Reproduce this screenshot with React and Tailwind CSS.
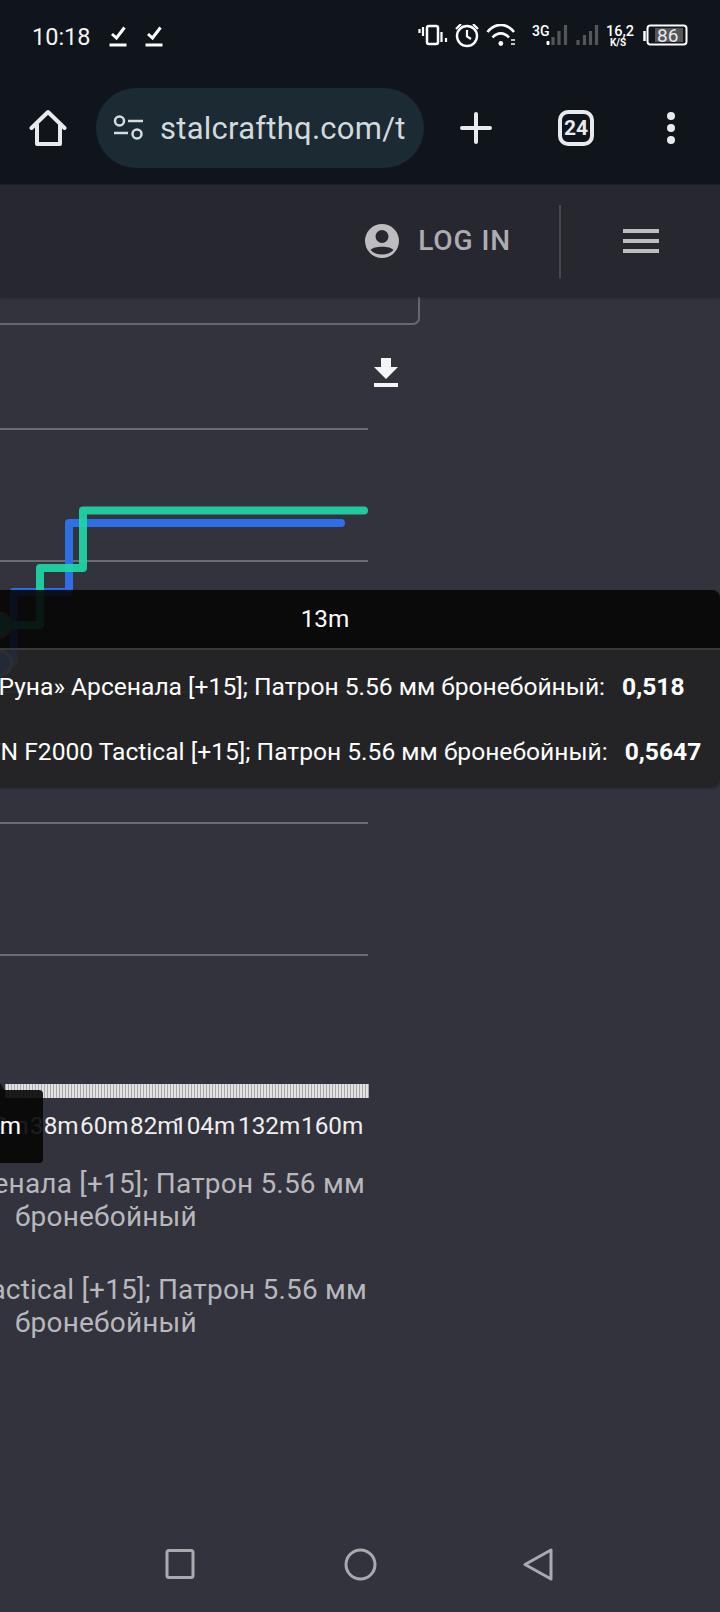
import React from 'react';

const axisLabels = [
  { text: '22m', width: 'w-[50px]' },
  { text: '38m', width: 'w-[50px]' },
  { text: '60m', width: 'w-[50px]' },
  { text: '82m', width: 'w-[43px]' },
  { text: '104m', width: 'w-[65px]' },
  { text: '132m', width: 'w-[63px]' },
  { text: '160m', width: 'w-[62px]' },
];

function CheckMark() {
  return (
    <svg width="18" height="21" viewBox="0 0 18 21" fill="none" stroke="#fff">
      <path d="M3 8l4.500 4L15.500 1.500" strokeWidth="3" />
      <path d="M0.5 19h17" strokeWidth="3" />
    </svg>
  );
}

function StatusIcons() {
  return (
    <svg width="270" height="24" viewBox="418 25 270 24" fill="none">
      {/* vibrate */}
      <path d="M419.500 30v4M423 28v9M441.500 33v10M446 39v4" stroke="#fff" strokeWidth="2.200" />
      <rect x="427" y="27" width="11" height="18" rx="2" stroke="#fff" strokeWidth="2.5" />
      {/* alarm */}
      <circle cx="467" cy="37" r="10" stroke="#fff" strokeWidth="2.4" />
      <path d="M467 31v6.500l4 2.500M456 30l5-5M478 30l-5-5" stroke="#fff" strokeWidth="2.200" />
      {/* wifi */}
      <path d="M487.500 33c7.500-9.500 19-9.500 26.500 0M492.500 38.500c5-5.500 11.500-5.500 16.500 0" stroke="#fff" strokeWidth="2.600" />
      <circle cx="500.800" cy="44.500" r="2.400" fill="#fff" />
      <path d="M511 41h4M511 45h4" stroke="#fff" strokeWidth="1.500" />
      {/* mobile signal */}
      <rect x="546.500" y="42" width="3" height="4" rx="1" fill="#fff" />
      <path d="M553 46v-8M559 46v-14M565.500 46v-20" stroke="#55565a" strokeWidth="3.200" />
      <path d="M578 46v-5M584.500 46v-10M590.500 46v-14M596.500 46v-20" stroke="#55565a" strokeWidth="3.200" />
      {/* battery */}
      <path d="M644.500 32v10" stroke="#fff" strokeWidth="2.500" />
      <rect x="647.500" y="26.500" width="39" height="19" rx="3" stroke="#fff" strokeWidth="2" />
      <rect x="655" y="29" width="28" height="14" fill="#55565a" />
    </svg>
  );
}

function HomeIcon() {
  return (
    <svg width="38" height="38" viewBox="0 0 38 38" fill="none" stroke="#e8eaed" strokeWidth="4" strokeLinejoin="round">
      <path d="M2.500 19L19 3l16.500 16" strokeLinecap="round" />
      <path d="M8 15v20h23V15" />
    </svg>
  );
}

function TuneIcon() {
  return (
    <svg width="30" height="26" viewBox="0 0 30 26" fill="none" stroke="#d6dbde" strokeWidth="2.500">
      <circle cx="6.500" cy="6" r="4.500" />
      <path d="M15 6h15M1 18h14" />
      <circle cx="24" cy="19" r="4.500" />
    </svg>
  );
}

function NavIcons() {
  return (
    <div className="mt-auto flex h-[96px] shrink-0 items-start pt-[32px]">
      <div className="ml-[165px]">
        <svg width="31" height="32" viewBox="0 0 31 32" fill="none" stroke="#a9a9ae" strokeWidth="3">
          <rect x="2" y="2.500" width="26" height="27" rx="2" />
        </svg>
      </div>
      <div className="ml-[148px]">
        <svg width="33" height="33" viewBox="0 0 33 33" fill="none" stroke="#a9a9ae" strokeWidth="3">
          <circle cx="16.500" cy="16.500" r="14.500" />
        </svg>
      </div>
      <div className="ml-[146px]">
        <svg width="30" height="33" viewBox="0 0 30 33" fill="none" stroke="#a9a9ae" strokeWidth="3" strokeLinejoin="round">
          <path d="M2 16.500L28 2v29z" />
        </svg>
      </div>
    </div>
  );
}

function ChartSvg() {
  return (
    <svg width="372" height="700" viewBox="0 400 372 700" fill="none" className="block shrink-0">
      <defs>
        <pattern id="ticks" x="0" y="0" width="3" height="14" patternUnits="userSpaceOnUse">
          <rect width="3" height="14" fill="#e2e2e2" />
          <rect x="2" width="1" height="14" fill="#a8a8ac" />
        </pattern>
      </defs>
      {[429, 561, 692, 823, 955].map((y) => (
        <path key={y} d={`M0 ${y}H368`} stroke="#6b6b71" strokeWidth="2" />
      ))}
      <path d="M0 663H13.500V592H69V523H341" stroke="#2f6fe6" strokeWidth="8" strokeLinecap="round" strokeLinejoin="round" />
      <path d="M0 625H40V568H83V510.500H364" stroke="#1fd4a3" strokeOpacity="0.95" strokeWidth="8" strokeLinecap="round" strokeLinejoin="round" />
      <circle cx="-2" cy="625" r="12.500" fill="#1fd4a3" stroke="#9a9aa0" strokeWidth="3" />
      <circle cx="-1" cy="663" r="12.500" fill="#2f6fe6" stroke="#9a9aa0" strokeWidth="3" />
      <rect x="5" y="1084" width="364" height="14" fill="url(#ticks)" />
      <path d="M-5 1091L0 1083l5 8z" fill="#111" />
    </svg>
  );
}

export default function App() {
  return (
    <div className="relative flex h-[1612px] w-[720px] flex-col overflow-hidden bg-[#33333d] font-[Roboto,sans-serif]">
      {/* Browser chrome */}
      <div className="shrink-0 bg-[#10151b]">
        <div className="flex h-[72px] items-center pl-[32px]">
          <span className="mt-[4px] w-[77px] text-[23.500px] leading-none text-[#f2f3f4]">10:18</span>
          <CheckMark />
          <span className="w-[18px]" />
          <CheckMark />
          <div className="relative ml-auto mr-[32px] h-[24px] w-[270px]">
            <StatusIcons />
            <span className="absolute left-[114px] top-[0px] text-[14px] font-medium leading-none text-white">3G</span>
            <span className="absolute left-[188px] top-[1px] text-[14.500px] font-medium leading-none text-white">16,2</span>
            <span className="absolute left-[192px] top-[14px] text-[10px] font-bold leading-none text-white">K/S</span>
            <span className="absolute left-[239px] top-[2px] text-[19px] leading-none text-[#e8e8e8]">86</span>
          </div>
        </div>
        <div className="flex h-[113px] items-start border-b border-[#1e2329]">
          <div className="ml-[29px] mt-[37px]">
            <HomeIcon />
          </div>
          <div className="ml-[29px] mt-[16px] flex h-[80px] w-[328px] items-center rounded-full bg-[#1b2a33] pl-[17px]">
            <TuneIcon />
            <span className="ml-[17px] text-[31px] leading-none tracking-[0.25px] text-[#d3d9dc]">stalcrafthq.com/t</span>
          </div>
          <svg width="34" height="34" viewBox="0 0 34 34" fill="none" stroke="#e8eaed" strokeWidth="4" strokeLinecap="round" className="ml-[35px] mt-[39px]">
            <path d="M17 3v28M3 17h28" />
          </svg>
          <div className="ml-[65px] mt-[38px] flex h-[36px] w-[36px] items-center justify-center rounded-[10px] border-4 border-[#e8eaed] text-[21px] font-bold leading-none text-[#e8eaed]">
            24
          </div>
          <div className="ml-[73px] mt-[40px] flex flex-col gap-[4px]">
            <span className="h-[8px] w-[8px] rounded-full bg-[#e8eaed]" />
            <span className="h-[8px] w-[8px] rounded-full bg-[#e8eaed]" />
            <span className="h-[8px] w-[8px] rounded-full bg-[#e8eaed]" />
          </div>
        </div>
      </div>

      {/* Site header */}
      <div className="z-10 flex h-[112px] shrink-0 items-center justify-end bg-[#27272f] shadow-[0_1px_3px_rgba(0,0,0,0.3)]">
        <svg width="34" height="34" viewBox="0 0 34 34" className="mr-[19px]">
          <circle cx="17" cy="17" r="17" fill="#bdbdc0" />
          <circle cx="17" cy="12.500" r="6.500" fill="#27272f" />
          <path d="M5.500 26c3-4.500 20-4.500 23 0-5.500 6-17.500 6-23 0z" fill="#27272f" />
        </svg>
        <span className="mr-[48px] text-[28px] font-medium leading-none tracking-[0.9px] text-[#adadb1]">LOG IN</span>
        <span className="mr-[62px] h-[73px] w-[2px] bg-[#47474d]" />
        <div className="mr-[61px] flex w-[36px] flex-col gap-[5.500px]">
          <span className="h-[4.500px] bg-[#bdbdc0]" />
          <span className="h-[4.500px] bg-[#bdbdc0]" />
          <span className="h-[4.500px] bg-[#bdbdc0]" />
        </div>
      </div>

      {/* Chart card */}
      <div className="flex flex-1 flex-col">
        <div className="h-[28px] w-[420px] shrink-0 rounded-br-[7px] border-b-2 border-r-2 border-[#66666c]" />
        <div className="flex h-[75px] shrink-0 items-start pl-[374px] pt-[33px]">
          <svg width="24" height="29" viewBox="0 0 24 29" fill="#f4f5f7">
            <path d="M7 0h10v9h7L12 21 0 9h7z" />
            <rect y="25" width="24" height="4" />
          </svg>
        </div>
        <ChartSvg />
        <div className="ml-[-20px] mt-[14px] flex shrink-0 text-[24.300px] leading-none text-[#eeeeee]">
          {axisLabels.map((label) => (
            <span key={label.text} className={`${label.width} whitespace-nowrap`}>{label.text}</span>
          ))}
        </div>
        <div className="ml-[-154px] mt-[29px] w-[520px] shrink-0 text-center text-[28px] leading-[33px] tracking-[0.2px] text-[#b8b8bc]">
          <p className="whitespace-nowrap">«Руна» Арсенала [+15]; Патрон 5.56 мм</p>
          <p>бронебойный</p>
        </div>
        <div className="ml-[-154px] mt-[40px] w-[520px] shrink-0 text-center text-[28px] leading-[33px] tracking-[0.2px] text-[#b8b8bc]">
          <p className="whitespace-nowrap">FN F2000 Tactical [+15]; Патрон 5.56 мм</p>
          <p>бронебойный</p>
        </div>
        <NavIcons />
      </div>

      {/* Chart tooltip */}
      <div className="absolute left-[-70px] top-[590px] w-[790px] overflow-hidden rounded-[8px] text-white shadow-[0_1px_3px_rgba(0,0,0,0.4)]">
        <div className="flex h-[60px] items-center justify-center border-b-2 border-[#3a3a3c] bg-[#050505]/90 text-[24.300px] leading-none">
          13m
        </div>
        <div className="h-[137px] bg-[#222224]/90 pl-[57px] text-[24.600px] leading-none">
          <div className="flex h-[64px] items-center whitespace-nowrap pt-[11px]">
            <span>«Руна» Арсенала [+15]; Патрон 5.56 мм бронебойный:</span>
            <b className="ml-[17px] font-bold">0,518</b>
          </div>
          <div className="flex h-[64px] items-center whitespace-nowrap pt-[12px]">
            <span>FN F2000 Tactical [+15]; Патрон 5.56 мм бронебойный:</span>
            <b className="ml-[17px] font-bold">0,5647</b>
          </div>
        </div>
      </div>

      {/* Range slider tooltip */}
      <div className="absolute left-[-40px] top-[1090px] flex h-[73px] w-[83px] items-center justify-end rounded-[4px] bg-[#050505]/90 pr-[22px] text-[24.300px] leading-none text-white">
        <span>5m</span>
      </div>
    </div>
  );
}
